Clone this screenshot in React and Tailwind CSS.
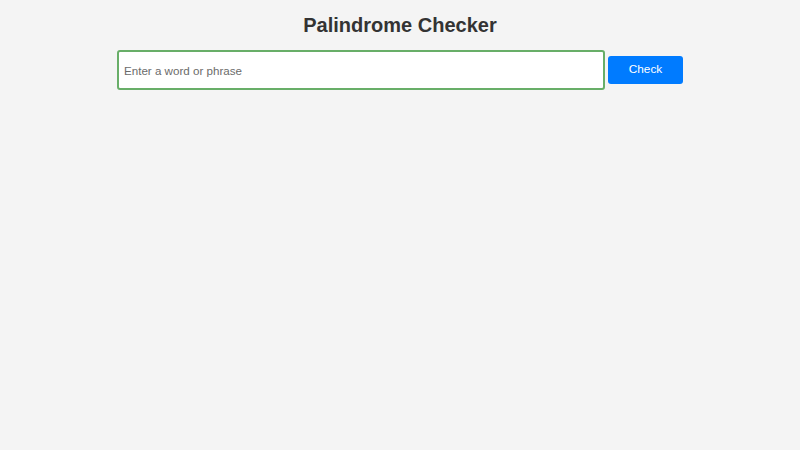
import { useState } from "react";

export default function App() {
  const [text, setText] = useState("");

  return (
    <div
      className="min-h-screen bg-[#f4f4f4] pt-[13px] text-[#333]"
      style={{ fontFamily: '"Liberation Sans", Arial, sans-serif' }}
    >
      <h1 className="text-center text-[20px] leading-[24px] font-bold mb-[13px]">
        Palindrome Checker
      </h1>

      <div className="flex items-center w-[566px] mx-auto">
        <input
          type="text"
          value={text}
          onChange={(e) => setText(e.target.value)}
          placeholder="Enter a word or phrase"
          className="flex-1 h-[40px] px-[5px] bg-white border-2 border-[#68ae68] rounded-[3px] text-[11.6px] placeholder:text-[#6b6b6b] outline-none"
        />
        <button className="ml-[3px] w-[75px] h-[28px] bg-[#007bff] text-white text-[11.8px] rounded-[3px]">
          Check
        </button>
      </div>
    </div>
  );
}
